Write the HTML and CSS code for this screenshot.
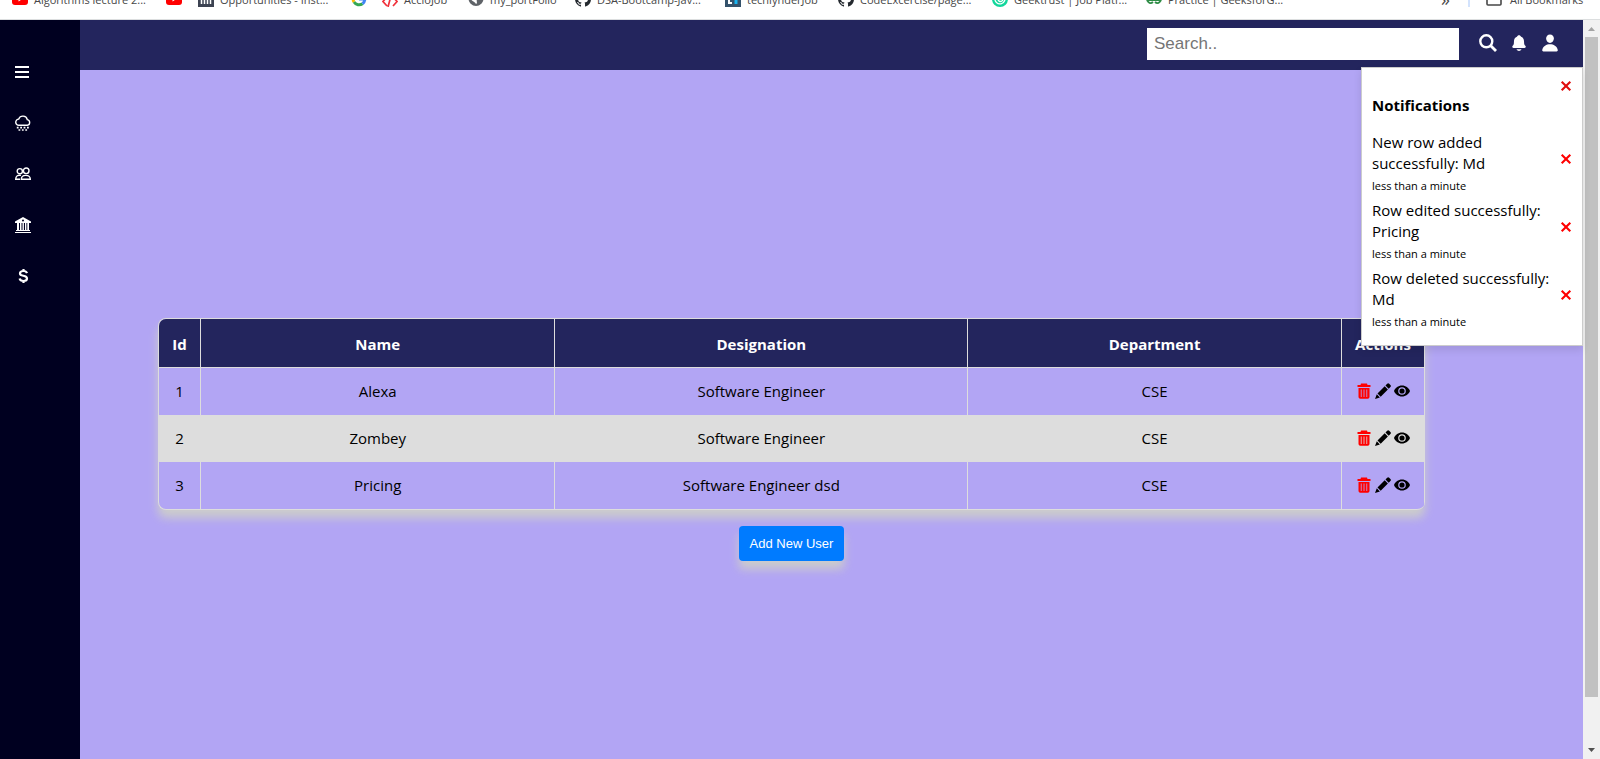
FILE: index.html
```
<!DOCTYPE html>
<html lang="en">
<head>
<meta charset="utf-8">
<title>Users</title>
<link rel="stylesheet" href="styles.css">
</head>
<body>
<svg class="sprite" aria-hidden="true">
  <symbol id="close" viewBox="0 0 12 12"><path d="M1.700 1.700l8.600 8.600M10.300 1.700L1.700 10.300" fill="none" stroke="currentColor" stroke-width="2.100"/></symbol>
  <symbol id="trash" viewBox="0 0 16 16"><path fill="currentColor" fill-rule="evenodd" d="M5 .5h6l.5 1.500H14.500v2H1.500V2H4.500zM2.500 5h11v9a1.800 1.800 0 0 1-1.800 1.800H4.300A1.800 1.800 0 0 1 2.500 14zM4.800 6.500v7.500h.8V6.500zM7.600 6.500v7.500h.8V6.500zM10.400 6.500v7.500h.8V6.500z"/></symbol>
  <symbol id="pencil" viewBox="0 0 16 16"><path fill="currentColor" d="M12.200.8a1.400 1.400 0 0 1 2 0l1.200 1.200a1.400 1.400 0 0 1 0 2L13.700 5.700l-3.200-3.200zM9.700 3.300l3.200 3.200-7.200 7.200-3.200-3.200zM1.800 11.300l3.100 3.100L0 16z"/></symbol>
  <symbol id="eye" viewBox="0 0 16 16"><path fill="currentColor" fill-rule="evenodd" d="M8 2.500C4.200 2.500 1.300 4.900 0 8c1.300 3.100 4.200 5.500 8 5.500s6.700-2.400 8-5.500c-1.300-3.100-4.200-5.500-8-5.500zM8 4.200a3.800 3.800 0 1 1 0 7.600 3.800 3.800 0 0 1 0-7.600zM8 5.400a2.600 2.600 0 1 0 0 5.200 2.600 2.600 0 0 0 0-5.200z"/></symbol>
  <symbol id="youtube" viewBox="0 0 16 16"><rect y="2" width="16" height="12" rx="3" fill="#f00"/><path fill="#fff" d="M6.500 5.500v5L10.500 8z"/></symbol>
  <symbol id="github" viewBox="0 0 16 16"><path fill="#24292f" d="M8 0C3.580 0 0 3.580 0 8c0 3.540 2.290 6.530 5.470 7.590.4.070.55-.17.55-.38v-1.490c-2.010.37-2.530-.49-2.690-.94-.09-.23-.48-.94-.82-1.130-.28-.15-.68-.52-.01-.53.63-.01 1.080.58 1.230.82.72 1.210 1.870.87 2.330.66.070-.52.28-.87.51-1.070-1.780-.2-3.640-.89-3.640-3.950 0-.87.310-1.590.82-2.150-.08-.2-.36-1.020.08-2.120 0 0 .67-.21 2.200.82a7.600 7.600 0 0 1 4 0c1.530-1.040 2.200-.82 2.200-.82.44 1.100.16 1.920.08 2.120.51.56.82 1.270.82 2.150 0 3.070-1.870 3.750-3.650 3.950.29.25.54.73.54 1.480v2.200c0 .21.150.46.55.38A8 8 0 0 0 16 8c0-4.420-3.580-8-8-8z"/></symbol>
</svg>

<nav class="bookmarks" aria-label="Bookmarks">
  <a class="bookmark" href="#"><svg><use href="#youtube"/></svg>Algorithms lecture 2...</a>
  <a class="bookmark" href="#" aria-label="YouTube"><svg><use href="#youtube"/></svg></a>
  <a class="bookmark" href="#"><svg viewBox="0 0 16 16"><path fill="#3d4352" d="M0 0h16v16H0z"/><path stroke="#fff" stroke-width="1.500" d="M3.500 4v9M6.500 6v7M9.500 6v7M12.500 6v7M6 6.500h7"/></svg>Opportunities - Inst...</a>
  <a class="bookmark" href="#" aria-label="Google"><svg viewBox="0 0 16 16" fill="none" stroke-width="3"><path stroke="#ea4335" d="M3 5a6 6 0 0 1 9.500-1.500"/><path stroke="#fbbc05" d="M3 5a6 6 0 0 0 0 6"/><path stroke="#34a853" d="M3 11a6 6 0 0 0 8.500 1.700"/><path stroke="#4285f4" d="M11.500 12.700A6 6 0 0 0 13.800 8H8"/></svg></a>
  <a class="bookmark" href="#"><svg viewBox="0 0 16 16" fill="none" stroke="#f0323c" stroke-width="1.700"><path d="M5 6L1 10.500l4 4.500M11 6l4 4.500-4 4.500M10 1L6 16"/></svg>AccioJob</a>
  <a class="bookmark" href="#"><svg viewBox="0 0 16 16"><circle cx="8" cy="7.500" r="7.500" fill="#5f6368"/><path fill="#fff" d="M7 2c3 0 5 2 6 4-1 1-3 0-4 2s1 4-1 5c-1-3-5-2-5-6z"/></svg>my_portFolio</a>
  <a class="bookmark" href="#"><svg><use href="#github"/></svg>DSA-Bootcamp-Jav...</a>
  <a class="bookmark" href="#"><svg viewBox="0 0 16 16"><path fill="#34526b" d="M0 0h16v16H0z"/><path fill="none" stroke="#fff" stroke-width="2" d="M4 3v9h3"/><path fill="none" stroke="#19b5f1" stroke-width="3" d="M11 3v10"/></svg>techlynderJob</a>
  <a class="bookmark" href="#"><svg><use href="#github"/></svg>CodeExcercise/page...</a>
  <a class="bookmark" href="#"><svg viewBox="0 0 16 16"><circle cx="8" cy="8" r="8" fill="#12d69b"/><path fill="none" stroke="#fff" stroke-width="1.300" d="M3 7a5 5 0 1 0 9-2M6 8a2.500 2.500 0 1 0 4-2"/></svg>Geektrust | Job Platf...</a>
  <a class="bookmark" href="#"><svg viewBox="0 0 16 16" fill="none" stroke="#2f8d46" stroke-width="1.800"><path d="M7 6a3.400 3.400 0 1 0 0 5M1 9h14M9 6a3.400 3.400 0 1 1 0 5"/></svg>Practice | GeeksforG...</a>
  <span class="bookmarks-more">»</span>
  <a class="bookmark bookmark-all" href="#"><svg viewBox="0 0 16 16" fill="none" stroke="#474747" stroke-width="1.600"><path d="M1 3a1 1 0 0 1 1-1h4l2 2h6a1 1 0 0 1 1 1v8a1 1 0 0 1-1 1H2a1 1 0 0 1-1-1z"/></svg>All Bookmarks</a>
</nav>

<div class="app">
  <nav class="sidebar" aria-label="Main">
    <button type="button" aria-label="Menu"><svg viewBox="0 0 16 16" stroke="#fff" stroke-width="2"><path d="M0 3h14M0 8h14M0 13h14"/></svg></button>
    <a href="#" aria-label="Weather"><svg viewBox="0 0 16 16" fill="none" stroke="#fff" stroke-width="1.400"><path d="M4 10.300a3.100 3.100 0 0 1-.3-6.200 4.500 4.500 0 0 1 8.600.5 2.900 2.900 0 0 1 0 5.700z"/><path stroke-width="1.600" stroke-dasharray="1.800 1.600" d="M1.800 12.600h12.400M3.500 15h9"/></svg></a>
    <a href="#" aria-label="Users"><svg viewBox="0 0 16 16" fill="none" stroke="#fff" stroke-width="1.400"><circle cx="4.800" cy="5.200" r="2.600"/><circle cx="11.200" cy="4.800" r="2.800"/><path d="M6.300 13.300c0-5.300 9-5.300 9 0zM5 13.300H.7c0-3.500 2.300-4.600 5.300-3.900"/></svg></a>
    <a href="#" aria-label="Bank"><svg viewBox="0 0 16 16" fill="#fff"><path fill-rule="evenodd" d="M8 0l8 4.500V6H0V4.500zM8 2.400a1 1 0 1 0 0 2 1 1 0 0 0 0-2zM2 6h2v7H2zM5 6h1.500v7H5zM7.500 6h1.400v7H7.500zM10 6h1.400v7H10zM12.300 6H14v7h-1.700zM1 13h14v1H1zM0 15h16v1H0z"/></svg></a>
    <a href="#" aria-label="Billing"><svg viewBox="0 0 16 16" fill="none" stroke="#fff" stroke-width="2.200"><path d="M12 5.200C11.500 3.700 10 3 8.500 3 6.500 3 5 4 5 5.500 5 9 12 6.500 12 10.500c0 1.500-1.500 2.500-3.500 2.500S5 12 4.600 10.500M8.500 1v2M8.500 13v2"/></svg></a>
  </nav>

  <div class="page">
    <header class="topbar">
      <input class="search" type="search" placeholder="Search.." aria-label="Search">
      <button type="button" aria-label="Search"><svg viewBox="0 0 18 18" fill="none" stroke="#fff"><circle cx="7.300" cy="7.300" r="6" stroke-width="2.400"/><path stroke-width="2.800" d="M11.500 11.500L17 17"/></svg></button>
      <button type="button" aria-label="Notifications"><svg viewBox="0 0 512 512" fill="#fff"><path d="M440.080 341.310c-1.660-2-3.290-4-4.890-5.930-22-26.610-35.310-42.670-35.310-118 0-39-9.330-71-27.720-95-13.560-17.730-31.890-31.180-56.050-41.120a3 3 0 0 1-.82-.67C306.600 51.490 282.820 32 256 32s-50.590 19.490-59.280 48.560a3.130 3.130 0 0 1-.81.650c-56.380 23.210-83.780 67.740-83.780 136.140 0 75.360-13.290 91.420-35.310 118-1.600 1.930-3.230 3.890-4.890 5.930a35.160 35.160 0 0 0-4.650 37.620c6.170 13 19.320 21.070 34.330 21.070H410.500c14.940 0 28-8.060 34.190-21a35.170 35.170 0 0 0-4.610-37.660zM256 480a80.060 80.060 0 0 0 70.440-42.130 4 4 0 0 0-3.540-5.870H189.120a4 4 0 0 0-3.550 5.870A80.060 80.060 0 0 0 256 480z"/></svg></button>
      <button type="button" aria-label="Profile"><svg viewBox="16 16 480 480" fill="#fff"><path d="M332.640 64.580C313.180 43.570 286 32 256 32c-30.160 0-57.430 11.500-76.800 32.380-19.580 21.110-29.120 49.800-26.880 80.780C156.760 206.280 203.270 256 256 256s99.160-49.710 103.670-110.820c2.270-30.700-7.330-59.330-27.030-80.600zM432 480H80a31 31 0 0 1-24.200-11.130c-6.500-7.770-9.120-18.380-7.180-29.110C57.060 392.940 83.400 353.610 124.800 326c36.780-24.510 83.370-38 131.200-38s94.420 13.500 131.200 38c41.400 27.600 67.740 66.930 76.180 113.750 1.940 10.730-.68 21.340-7.180 29.110A31 31 0 0 1 432 480z"/></svg></button>
      <section class="notifications" aria-label="Notifications">
        <button class="close" type="button" aria-label="Close"><svg><use href="#close"/></svg></button>
        <h2>Notifications</h2>
        <ul>
          <li><div><p>New row added successfully: Md</p><small>less than a minute</small></div><button class="close" type="button" aria-label="Dismiss"><svg><use href="#close"/></svg></button></li>
          <li><div><p>Row edited successfully: Pricing</p><small>less than a minute</small></div><button class="close" type="button" aria-label="Dismiss"><svg><use href="#close"/></svg></button></li>
          <li><div><p>Row deleted successfully: Md</p><small>less than a minute</small></div><button class="close" type="button" aria-label="Dismiss"><svg><use href="#close"/></svg></button></li>
        </ul>
      </section>
    </header>

    <main class="content">
      <table class="users">
        <colgroup><col class="col-id"><col class="col-name"><col class="col-role"><col class="col-dept"><col class="col-actions"></colgroup>
        <thead><tr><th>Id</th><th>Name</th><th>Designation</th><th>Department</th><th>Actions</th></tr></thead>
        <tbody>
          <tr><td>1</td><td>Alexa</td><td>Software Engineer</td><td>CSE</td><td><div class="actions"><button class="delete" type="button" aria-label="Delete"><svg><use href="#trash"/></svg></button><button type="button" aria-label="Edit"><svg><use href="#pencil"/></svg></button><button type="button" aria-label="View"><svg><use href="#eye"/></svg></button></div></td></tr>
          <tr><td>2</td><td>Zombey</td><td>Software Engineer</td><td>CSE</td><td><div class="actions"><button class="delete" type="button" aria-label="Delete"><svg><use href="#trash"/></svg></button><button type="button" aria-label="Edit"><svg><use href="#pencil"/></svg></button><button type="button" aria-label="View"><svg><use href="#eye"/></svg></button></div></td></tr>
          <tr><td>3</td><td>Pricing</td><td>Software Engineer dsd</td><td>CSE</td><td><div class="actions"><button class="delete" type="button" aria-label="Delete"><svg><use href="#trash"/></svg></button><button type="button" aria-label="Edit"><svg><use href="#pencil"/></svg></button><button type="button" aria-label="View"><svg><use href="#eye"/></svg></button></div></td></tr>
        </tbody>
      </table>
      <button class="add-user" type="button">Add New User</button>
    </main>
  </div>

  <div class="scrollbar" aria-hidden="true">
    <svg viewBox="0 0 7 4"><path fill="#a3a3a3" d="M0 4l3.500-4L7 4z"/></svg>
    <div class="thumb"></div>
    <svg viewBox="0 0 7 4"><path fill="#505050" d="M0 0l3.500 4L7 0z"/></svg>
  </div>
</div>
</body>
</html>
```
FILE: styles.css
```
* {
  box-sizing: border-box;
}

body {
  margin: 0;
  height: 100vh;
  display: flex;
  flex-direction: column;
  overflow: hidden;
  background: #fff;
  color: #000;
  font: 15px/21px "Open Sans", "Noto Sans", sans-serif;
}

button {
  padding: 0;
  border: 0;
  background: none;
  color: inherit;
  cursor: pointer;
}

svg {
  display: block;
  flex: none;
}

.sprite {
  position: absolute;
  width: 0;
  height: 0;
}

/* Bookmarks bar */
.bookmarks {
  flex: none;
  height: 20px;
  overflow: hidden;
  display: grid;
  grid-template-columns: 154px 32px 153px 31px 86px 107px 150px 113px 154px 154px 1fr 27px 132px;
  padding-left: 12px;
  border-bottom: 1px solid #dcdedf;
}

.bookmark,
.bookmarks-more {
  display: flex;
  gap: 6px;
  height: 16px;
  margin-top: -9px;
  color: #474747;
  font-size: 11px;
  line-height: 17px;
  text-decoration: none;
  white-space: nowrap;
}

.bookmarks-more {
  font-size: 18px;
}

.bookmark svg {
  width: 16px;
  height: 16px;
}

.bookmark-all {
  gap: 8px;
  padding-left: 16px;
  border-left: 2px solid #d3e3fd;
}

/* Shell */
.app {
  flex: 1;
  min-height: 0;
  display: flex;
}

.sidebar {
  flex: none;
  width: 80px;
  display: flex;
  flex-direction: column;
  align-items: flex-start;
  gap: 35px;
  padding: 44px 15px;
  background: #000020;
}

.sidebar svg {
  width: 16px;
  height: 16px;
}

.page {
  flex: 1;
  min-width: 0;
  display: flex;
  flex-direction: column;
  background: #b2a5f4;
}

.topbar {
  position: relative;
  flex: none;
  height: 50px;
  display: flex;
  align-items: flex-start;
  justify-content: flex-end;
  gap: 13px;
  padding: 8px 24px 0 0;
  background: #23255d;
}

.topbar > button {
  margin-top: 6px;
}

.topbar > button svg {
  width: 18px;
  height: 18px;
}

.search {
  width: 312px;
  height: 32px;
  margin-right: 7px;
  padding: 0 7px;
  border: 0;
  border-radius: 0;
  background: #fff;
  font: 17px "Liberation Sans", Arial, sans-serif;
  appearance: none;
}

.search::placeholder {
  color: #757575;
}

/* Notifications */
.notifications {
  position: absolute;
  z-index: 1;
  top: 47px;
  right: 0;
  width: 222px;
  padding: 12px 10px 16px;
  border: 1px solid #ccc;
  background: #fff;
  box-shadow: 0 4px 8px rgba(0, 0, 0, 0.1);
}

.close {
  flex: none;
  color: #f00;
}

.close svg {
  width: 12px;
  height: 12px;
}

.notifications > .close {
  display: block;
  margin-left: auto;
  color: #e00d0d;
}

.notifications h2 {
  margin: 3px 0 9px;
  font-size: 15px;
  line-height: 21px;
}

.notifications ul {
  margin: 0;
  padding: 0;
  list-style: none;
}

.notifications li {
  display: flex;
  align-items: center;
  justify-content: space-between;
}

.notifications p {
  margin: 7px 0 4px;
}

.notifications small {
  display: block;
  font-size: 11px;
  line-height: 15px;
}

/* Users table */
.content {
  flex: 1;
  display: flex;
  flex-direction: column;
  align-items: center;
  justify-content: center;
  gap: 16px;
  padding: 50px 158px 0 78px;
}

.users {
  width: 100%;
  table-layout: fixed;
  border-spacing: 0;
  border: 1px solid #ddd;
  border-right: 0;
  border-radius: 8px;
  overflow: hidden;
  box-shadow: 0 8px 10px #ccc;
  background: #b2a5f4;
  text-align: center;
}

.users th,
.users td {
  padding: 0;
  border-right: 1px solid #ddd;
}

.users td {
  height: 47px;
}

.users th {
  height: 49px;
  padding-top: 2px;
  border-bottom: 1px solid #ddd;
  background: #23255d;
  color: #fff;
}

.users tbody tr:nth-child(even) {
  background: #ddd;
}

.col-id {
  width: 42px;
}

.col-name {
  width: 28%;
}

.col-role {
  width: 32.6%;
}

.col-actions {
  width: 83px;
}

.actions {
  display: flex;
  justify-content: center;
  gap: 3px;
  padding-bottom: 2px;
}

.actions svg {
  width: 16px;
  height: 16px;
}

.delete {
  color: #f00;
}

.add-user {
  padding: 10px 11px;
  border-radius: 4px;
  background: #007bff;
  box-shadow: 0 8px 10px #ccc;
  color: #fff;
  font: 13px/15px "Liberation Sans", Arial, sans-serif;
}

/* Scrollbar */
.scrollbar {
  flex: none;
  width: 17px;
  display: flex;
  flex-direction: column;
  align-items: center;
  padding: 7px 2px;
  background: #f1f1f1;
}

.scrollbar svg {
  width: 7px;
  height: 4px;
}

.thumb {
  width: 13px;
  height: 91%;
  margin: 6px 0 auto;
  background: #c1c1c1;
}
```
